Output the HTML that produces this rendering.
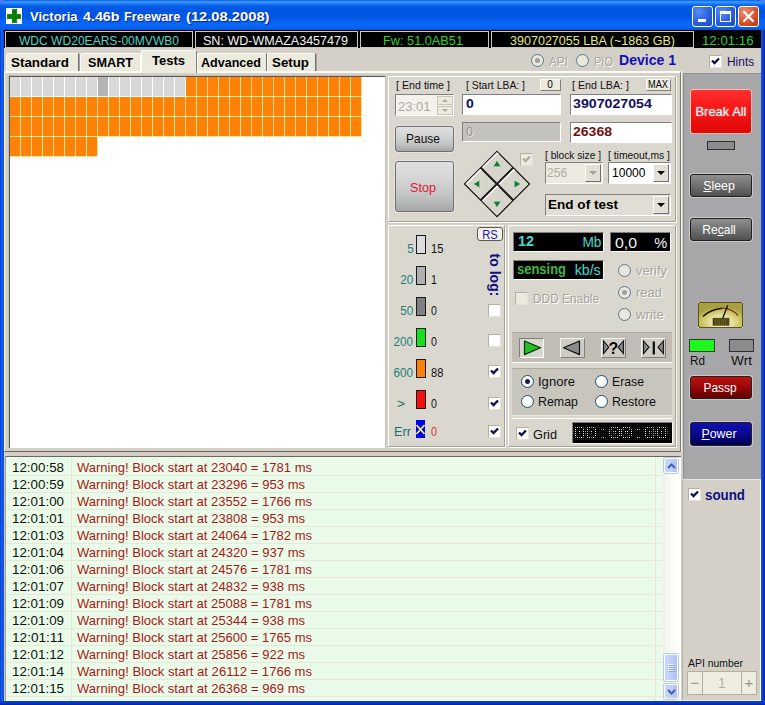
<!DOCTYPE html>
<html><head><meta charset="utf-8"><title>Victoria 4.46b Freeware</title>
<style>
html,body{margin:0;padding:0;background:#4a7cf8;}
body{width:765px;height:705px;position:relative;overflow:hidden;font-family:"Liberation Sans",sans-serif;}
div{position:absolute;}
.t{position:absolute;white-space:nowrap;font-family:"Liberation Sans",sans-serif;}
.blk i{position:absolute;width:10px;height:19px;}
.blk i.o{background:#ff8208;box-shadow:1px 0 0 #ffe290,0 1px 0 #ffe290,1px 1px 0 #fff0c4;}
u{text-decoration:underline;}
</style></head><body>
<div style="left:0px;top:0px;width:765px;height:705px;background:#0831d9;border-radius:8px 8px 0 0;"></div>
<div style="left:0px;top:0px;width:765px;height:30px;border-radius:8px 8px 0 0;background:linear-gradient(#0058d0 0%,#2f8cff 4%,#3a93ff 8%,#1a78f4 13%,#075fe8 20%,#0057e4 30%,#0055e0 55%,#0460f0 68%,#0866f6 80%,#0762f0 92%,#0452da 100%);"></div>
<div style="left:0px;top:30px;width:4px;height:675px;background:linear-gradient(90deg,#0634c8,#1660f0 40%,#0b55ea 70%,#0a49d8);"></div>
<div style="left:761px;top:30px;width:4px;height:675px;background:linear-gradient(90deg,#1c50e0,#0c3ccc 50%,#0224a8);"></div>
<div style="left:0px;top:701px;width:765px;height:4px;background:linear-gradient(#0c40d0,#0a36c4 50%,#0424a0);"></div>
<div style="left:4px;top:30px;width:757px;height:671px;background:#d4d0c8;"></div>
<div style="left:6px;top:8px;width:16px;height:16px;background:#fff;"></div>
<div style="left:11.5px;top:9px;width:5.5px;height:14px;background:#12900f;"></div>
<div style="left:7px;top:13.5px;width:14px;height:5.5px;background:#12900f;"></div>
<div style="left:12.5px;top:10px;width:3.5px;height:12px;background:#0a7a08;"></div>
<div style="left:8px;top:14.5px;width:12px;height:3.5px;background:#0a7a08;"></div>
<span id="t1" class="t" style="left:29.5px;top:8.0px;font-size:13px;line-height:17px;color:#fff;font-weight:bold;transform:scaleX(1.0010);transform-origin:left center;text-shadow:1px 1px 0 #0a2a90;">Victoria</span>
<span id="t2" class="t" style="left:83px;top:8.0px;font-size:13px;line-height:17px;color:#fff;font-weight:bold;transform:scaleX(1.0977);transform-origin:left center;text-shadow:1px 1px 0 #0a2a90;">4.46b</span>
<span id="t3" class="t" style="left:123.5px;top:8.0px;font-size:13px;line-height:17px;color:#fff;font-weight:bold;transform:scaleX(0.9896);transform-origin:left center;text-shadow:1px 1px 0 #0a2a90;">Freeware</span>
<span id="t4" class="t" style="left:185.5px;top:8.0px;font-size:13px;line-height:17px;color:#fff;font-weight:bold;transform:scaleX(1.1324);transform-origin:left center;text-shadow:1px 1px 0 #0a2a90;">(12.08.2008)</span>
<div style="left:692px;top:6px;width:21px;height:21px;border:1px solid #fff;border-radius:3px;box-sizing:border-box;background:radial-gradient(circle at 30% 25%,#5b8df5,#2a5fe0 55%,#1c47c4);"><div style="left:5px;top:12px;width:8px;height:3px;background:#fff"></div></div>
<div style="left:715px;top:6px;width:21px;height:21px;border:1px solid #fff;border-radius:3px;box-sizing:border-box;background:radial-gradient(circle at 30% 25%,#5b8df5,#2a5fe0 55%,#1c47c4);"><div style="left:4px;top:4px;width:11px;height:11px;box-sizing:border-box;border:1px solid #fff;border-top:3px solid #fff"></div></div>
<div style="left:738px;top:6px;width:21px;height:21px;border:1px solid #fff;border-radius:3px;box-sizing:border-box;background:radial-gradient(circle at 30% 25%,#f0906c,#d8532b 55%,#bb3513);"><svg style="position:absolute;left:0;top:0" width="19" height="19" viewBox="0 0 19 19"><path d="M5 5 L14 14 M14 5 L5 14" stroke="#fff" stroke-width="2.2" stroke-linecap="round"/></svg></div>
<div style="left:4px;top:30px;width:757px;height:18px;background:#000;"></div>
<div style="left:5px;top:31px;width:188px;height:17px;box-sizing:border-box;border:1px solid #c8c8c0;background:#000;"></div>
<div style="left:195px;top:31px;width:163px;height:17px;box-sizing:border-box;border:1px solid #c8c8c0;background:#000;"></div>
<div style="left:360px;top:31px;width:129px;height:17px;box-sizing:border-box;border:1px solid #c8c8c0;background:#000;"></div>
<div style="left:491px;top:31px;width:203px;height:17px;box-sizing:border-box;border:1px solid #c8c8c0;background:#000;"></div>
<span id="t5" class="t" style="left:19px;top:31.5px;font-size:13px;line-height:17px;color:#50d4c4;font-weight:normal;transform:scaleX(0.9268);transform-origin:left center;">WDC WD20EARS-00MVWB0</span>
<span id="t6" class="t" style="left:203px;top:31.5px;font-size:13px;line-height:17px;color:#f4f4f4;font-weight:normal;transform:scaleX(0.9650);transform-origin:left center;">SN: WD-WMAZA3457479</span>
<span id="t7" class="t" style="left:383px;top:31.5px;font-size:13px;line-height:17px;color:#30d030;font-weight:normal;transform:scaleX(0.9797);transform-origin:left center;">Fw: 51.0AB51</span>
<span id="t8" class="t" style="left:510px;top:31.5px;font-size:13px;line-height:17px;color:#e4e890;font-weight:normal;transform:scaleX(0.9652);transform-origin:left center;">3907027055 LBA (~1863 GB)</span>
<span id="t9" class="t" style="left:702px;top:31.5px;font-size:13px;line-height:17px;color:#38c840;font-weight:normal;transform:scaleX(1.0176);transform-origin:left center;">12:01:16</span>
<div style="left:6px;top:53px;width:73px;height:18px;box-sizing:border-box;background:#ece9dd;border:1px solid #f8f8f4;border-bottom:none;border-radius:2px 2px 0 0;border-right:1px solid #707070;box-shadow:1px 0 0 #a8a498;"></div>
<span id="t10" class="t" style="left:11px;top:53.5px;font-size:13px;line-height:17px;color:#000;font-weight:bold;transform:scaleX(1.0294);transform-origin:left center;">Standard</span>
<div style="left:80px;top:53px;width:61px;height:18px;box-sizing:border-box;background:#ece9dd;border:1px solid #f8f8f4;border-bottom:none;border-radius:2px 2px 0 0;"></div>
<span id="t11" class="t" style="left:88px;top:53.5px;font-size:13px;line-height:17px;color:#000;font-weight:bold;transform:scaleX(0.9736);transform-origin:left center;">SMART</span>
<div style="left:197px;top:53px;width:70px;height:18px;box-sizing:border-box;background:#ece9dd;border:1px solid #f8f8f4;border-bottom:none;border-radius:2px 2px 0 0;border-right:1px solid #707070;box-shadow:1px 0 0 #a8a498;"></div>
<span id="t12" class="t" style="left:201px;top:53.5px;font-size:13px;line-height:17px;color:#000;font-weight:bold;transform:scaleX(0.9656);transform-origin:left center;">Advanced</span>
<div style="left:267px;top:53px;width:49px;height:18px;box-sizing:border-box;background:#ece9dd;border:1px solid #f8f8f4;border-bottom:none;border-radius:2px 2px 0 0;border-right:1px solid #707070;box-shadow:1px 0 0 #a8a498;"></div>
<span id="t13" class="t" style="left:272px;top:53.5px;font-size:13px;line-height:17px;color:#000;font-weight:bold;transform:scaleX(1.0242);transform-origin:left center;">Setup</span>
<div style="left:4px;top:71px;width:677px;height:381px;box-sizing:border-box;border-top:2px solid #fbfbf8;border-left:1px solid #fff;border-bottom:1px solid #6c685c;border-right:1px solid #807c70;box-shadow:1px 0 0 #f4f4f0;"></div>
<div style="left:141px;top:50px;width:56px;height:23px;box-sizing:border-box;background:#ece9dd;border:1px solid #fff;border-right:1px solid #808080;border-bottom:none;border-radius:2px 2px 0 0;"></div>
<span id="t14" class="t" style="left:152px;top:52.0px;font-size:13px;line-height:17px;color:#000;font-weight:bold;transform:scaleX(1.0000);transform-origin:left center;">Tests</span>
<div style="left:531px;top:54px;width:13px;height:13px;box-sizing:border-box;border:1px solid #587890;border-radius:50%;background:#eae8dc;"><div style="left:3px;top:3px;width:5px;height:5px;border-radius:50%;background:#a0a098"></div></div>
<span id="t15" class="t" style="left:549px;top:52.5px;font-size:13px;line-height:17px;color:#a8a49c;font-weight:normal;transform:scaleX(0.9061);transform-origin:left center;text-shadow:1px 1px 0 #fff;">API</span>
<div style="left:576px;top:54px;width:13px;height:13px;box-sizing:border-box;border:1px solid #587890;border-radius:50%;background:#eae8dc;"></div>
<span id="t16" class="t" style="left:594px;top:52.5px;font-size:13px;line-height:17px;color:#a8a49c;font-weight:normal;transform:scaleX(0.8480);transform-origin:left center;text-shadow:1px 1px 0 #fff;">PIO</span>
<span id="t17" class="t" style="left:618.5px;top:49.9px;font-size:15px;line-height:19px;color:#1010b0;font-weight:bold;transform:scaleX(0.9361);transform-origin:left center;">Device 1</span>
<div style="left:709px;top:55px;width:13px;height:13px;box-sizing:border-box;border:1px solid #e4e2d8;border-top-color:#b4b0a4;border-left-color:#b4b0a4;background:#fff;"><svg style="position:absolute;left:1px;top:1px" width="9" height="9" viewBox="0 0 9 9"><path d="M1 3.5 L3.5 6 L8 1.5" fill="none" stroke="#101050" stroke-width="2.3"/></svg></div>
<span id="t18" class="t" style="left:726.8px;top:53.3px;font-size:13px;line-height:17px;color:#101060;font-weight:normal;transform:scaleX(0.9181);transform-origin:left center;">Hints</span>
<div style="left:8px;top:75px;width:378px;height:373px;background:#c4c0b8;"></div>
<div style="left:9px;top:76px;width:376px;height:372px;box-sizing:border-box;border-top:1px solid #5c5850;border-left:1px solid #5c5850;background:#fff;"></div>
<div class="blk" style="left:0;top:0;width:0;height:0"><i style="left:10px;top:77px;background:#d8d8d8"></i><i style="left:21px;top:77px;background:#d8d8d8"></i><i style="left:32px;top:77px;background:#d8d8d8"></i><i style="left:43px;top:77px;background:#d8d8d8"></i><i style="left:54px;top:77px;background:#d8d8d8"></i><i style="left:65px;top:77px;background:#d8d8d8"></i><i style="left:76px;top:77px;background:#d8d8d8"></i><i style="left:87px;top:77px;background:#d8d8d8"></i><i style="left:98px;top:77px;background:#b4b4b4"></i><i style="left:109px;top:77px;background:#d8d8d8"></i><i style="left:120px;top:77px;background:#d8d8d8"></i><i style="left:131px;top:77px;background:#d8d8d8"></i><i style="left:142px;top:77px;background:#d8d8d8"></i><i style="left:153px;top:77px;background:#d8d8d8"></i><i style="left:164px;top:77px;background:#d8d8d8"></i><i style="left:175px;top:77px;background:#d8d8d8"></i><i class="o" style="left:186px;top:77px"></i><i class="o" style="left:197px;top:77px"></i><i class="o" style="left:208px;top:77px"></i><i class="o" style="left:219px;top:77px"></i><i class="o" style="left:230px;top:77px"></i><i class="o" style="left:241px;top:77px"></i><i class="o" style="left:252px;top:77px"></i><i class="o" style="left:263px;top:77px"></i><i class="o" style="left:274px;top:77px"></i><i class="o" style="left:285px;top:77px"></i><i class="o" style="left:296px;top:77px"></i><i class="o" style="left:307px;top:77px"></i><i class="o" style="left:318px;top:77px"></i><i class="o" style="left:329px;top:77px"></i><i class="o" style="left:340px;top:77px"></i><i class="o" style="left:351px;top:77px"></i><i class="o" style="left:10px;top:97px"></i><i class="o" style="left:21px;top:97px"></i><i class="o" style="left:32px;top:97px"></i><i class="o" style="left:43px;top:97px"></i><i class="o" style="left:54px;top:97px"></i><i class="o" style="left:65px;top:97px"></i><i class="o" style="left:76px;top:97px"></i><i class="o" style="left:87px;top:97px"></i><i class="o" style="left:98px;top:97px"></i><i class="o" style="left:109px;top:97px"></i><i class="o" style="left:120px;top:97px"></i><i class="o" style="left:131px;top:97px"></i><i class="o" style="left:142px;top:97px"></i><i class="o" style="left:153px;top:97px"></i><i class="o" style="left:164px;top:97px"></i><i class="o" style="left:175px;top:97px"></i><i class="o" style="left:186px;top:97px"></i><i class="o" style="left:197px;top:97px"></i><i class="o" style="left:208px;top:97px"></i><i class="o" style="left:219px;top:97px"></i><i class="o" style="left:230px;top:97px"></i><i class="o" style="left:241px;top:97px"></i><i class="o" style="left:252px;top:97px"></i><i class="o" style="left:263px;top:97px"></i><i class="o" style="left:274px;top:97px"></i><i class="o" style="left:285px;top:97px"></i><i class="o" style="left:296px;top:97px"></i><i class="o" style="left:307px;top:97px"></i><i class="o" style="left:318px;top:97px"></i><i class="o" style="left:329px;top:97px"></i><i class="o" style="left:340px;top:97px"></i><i class="o" style="left:351px;top:97px"></i><i class="o" style="left:10px;top:117px"></i><i class="o" style="left:21px;top:117px"></i><i class="o" style="left:32px;top:117px"></i><i class="o" style="left:43px;top:117px"></i><i class="o" style="left:54px;top:117px"></i><i class="o" style="left:65px;top:117px"></i><i class="o" style="left:76px;top:117px"></i><i class="o" style="left:87px;top:117px"></i><i class="o" style="left:98px;top:117px"></i><i class="o" style="left:109px;top:117px"></i><i class="o" style="left:120px;top:117px"></i><i class="o" style="left:131px;top:117px"></i><i class="o" style="left:142px;top:117px"></i><i class="o" style="left:153px;top:117px"></i><i class="o" style="left:164px;top:117px"></i><i class="o" style="left:175px;top:117px"></i><i class="o" style="left:186px;top:117px"></i><i class="o" style="left:197px;top:117px"></i><i class="o" style="left:208px;top:117px"></i><i class="o" style="left:219px;top:117px"></i><i class="o" style="left:230px;top:117px"></i><i class="o" style="left:241px;top:117px"></i><i class="o" style="left:252px;top:117px"></i><i class="o" style="left:263px;top:117px"></i><i class="o" style="left:274px;top:117px"></i><i class="o" style="left:285px;top:117px"></i><i class="o" style="left:296px;top:117px"></i><i class="o" style="left:307px;top:117px"></i><i class="o" style="left:318px;top:117px"></i><i class="o" style="left:329px;top:117px"></i><i class="o" style="left:340px;top:117px"></i><i class="o" style="left:351px;top:117px"></i><i class="o" style="left:10px;top:137px"></i><i class="o" style="left:21px;top:137px"></i><i class="o" style="left:32px;top:137px"></i><i class="o" style="left:43px;top:137px"></i><i class="o" style="left:54px;top:137px"></i><i class="o" style="left:65px;top:137px"></i><i class="o" style="left:76px;top:137px"></i><i class="o" style="left:87px;top:137px"></i></div>
<div style="left:388px;top:76px;width:288px;height:146px;box-sizing:border-box;background:#dad7cf;border:1px solid #fff;border-right-color:#a4a094;border-bottom-color:#a4a094;box-shadow:1px 1px 0 #fff;"></div>
<span id="t19" class="t" style="left:396px;top:78.0px;font-size:11px;line-height:15px;color:#101010;font-weight:normal;transform:scaleX(0.9705);transform-origin:left center;">[ End time ]</span>
<span id="t20" class="t" style="left:466px;top:78.0px;font-size:11px;line-height:15px;color:#101010;font-weight:normal;transform:scaleX(0.9461);transform-origin:left center;">[ Start LBA: ]</span>
<span id="t21" class="t" style="left:572px;top:78.0px;font-size:11px;line-height:15px;color:#101010;font-weight:normal;transform:scaleX(0.9710);transform-origin:left center;">[ End LBA: ]</span>
<div style="left:395px;top:94px;width:59px;height:22px;box-sizing:border-box;border:1px solid #808080;border-right-color:#fff;border-bottom-color:#fff;background:#f4f2ea;"></div>
<span id="t22" class="t" style="left:397.5px;top:97.5px;font-size:13px;line-height:17px;color:#b0aca0;font-weight:normal;transform:scaleX(1.0016);transform-origin:left center;">23:01</span>
<div style="left:437px;top:96px;width:16px;height:9px;box-sizing:border-box;border:1px solid #c8c4b8;background:#ece9dd;"><div style="left:4px;top:2px;border:3px solid transparent;border-top:0;border-bottom:3px solid #b0ac9c;width:0;height:0"></div></div>
<div style="left:437px;top:106px;width:16px;height:9px;box-sizing:border-box;border:1px solid #c8c4b8;background:#ece9dd;"><div style="left:4px;top:2px;border:3px solid transparent;border-bottom:0;border-top:3px solid #b0ac9c;width:0;height:0"></div></div>
<div style="left:540px;top:79px;width:21px;height:12px;box-sizing:border-box;border:1px solid #f8f8f2;border-right-color:#848074;border-bottom-color:#848074;background:#ecebe0;"></div>
<span id="t23" class="t" style="left:550px;top:78.2px;font-size:10px;line-height:14px;color:#000;font-weight:normal;transform:translateX(-50%) ;">0</span>
<div style="left:646px;top:79px;width:25px;height:12px;box-sizing:border-box;border:1px solid #f8f8f2;border-right-color:#848074;border-bottom-color:#848074;background:#ecebe0;"></div>
<span id="t24" class="t" style="left:658px;top:78.2px;font-size:10px;line-height:14px;color:#000;font-weight:normal;transform:translateX(-50%) scaleX(0.9229);">MAX</span>
<div style="left:462px;top:94px;width:99px;height:21px;box-sizing:border-box;border:1px solid #808080;border-right-color:#fff;border-bottom-color:#fff;background:#fff;"></div>
<span id="t25" class="t" style="left:465.5px;top:94.8px;font-size:13.5px;line-height:17.5px;color:#101060;font-weight:bold;transform:scaleX(1.0378);transform-origin:left center;">0</span>
<div style="left:570px;top:94px;width:102px;height:21px;box-sizing:border-box;border:1px solid #808080;border-right-color:#fff;border-bottom-color:#fff;background:#fff;"></div>
<span id="t26" class="t" style="left:573.2px;top:94.8px;font-size:13.5px;line-height:17.5px;color:#101060;font-weight:bold;transform:scaleX(1.0494);transform-origin:left center;">3907027054</span>
<div style="left:462px;top:122px;width:99px;height:20px;box-sizing:border-box;border:1px solid #808080;border-right-color:#fff;border-bottom-color:#fff;background:#c4c2bc;"></div>
<span id="t27" class="t" style="left:465.5px;top:122.8px;font-size:13.5px;line-height:17.5px;color:#98948c;font-weight:normal;transform:scaleX(0.9314);transform-origin:left center;text-shadow:1px 1px 0 #e8e8e8;">0</span>
<div style="left:570px;top:122px;width:102px;height:21px;box-sizing:border-box;border:1px solid #808080;border-right-color:#fff;border-bottom-color:#fff;background:#fff;"></div>
<span id="t28" class="t" style="left:573.2px;top:122.8px;font-size:13.5px;line-height:17.5px;color:#701010;font-weight:bold;transform:scaleX(1.0387);transform-origin:left center;">26368</span>
<div style="left:395px;top:126px;width:59px;height:26px;box-sizing:border-box;border:1px solid #707070;border-radius:3px;background:linear-gradient(#e0e0e0 0%,#d4d4d4 35%,#c2c4c4 70%,#a6a6a6 100%);box-shadow:0 0 0 1px #e4e2dc;"></div>
<span id="t29" class="t" style="left:423.2px;top:129.7px;font-size:13px;line-height:17px;color:#101010;font-weight:normal;transform:translateX(-50%) scaleX(0.9166);">Pause</span>
<div style="left:395px;top:161px;width:59px;height:51px;box-sizing:border-box;border:1px solid #707070;border-radius:3px;background:linear-gradient(#e0e0e0 0%,#d4d4d4 35%,#c2c4c4 70%,#a6a6a6 100%);box-shadow:0 0 0 1px #e4e2dc;"></div>
<span id="t30" class="t" style="left:423.3px;top:179.0px;font-size:13px;line-height:17px;color:#e01838;font-weight:normal;transform:translateX(-50%) scaleX(0.9682);">Stop</span>
<svg style="position:absolute;left:462px;top:148.5px" width="70" height="70" viewBox="0 0 70 70"><path d="M35.0 2.3999999999999986 L51.0 18.4 L35.0 34.4 L19.0 18.4 Z" fill="#d8d5cd" stroke="#101010" stroke-width="1.1"/><path d="M20.7 18.4 L35.0 4.099999999999998 L36.2 5.299999999999999" fill="none" stroke="#fff" stroke-width="1.3"/><path d="M0 -2.8 L3.3 2.6 L-3.3 2.6 Z" fill="#147030" stroke="#58c870" stroke-width="0.5" transform="translate(35.0 14.7) rotate(0)"/><path d="M51.6 19.0 L67.6 35.0 L51.6 51.0 L35.6 35.0 Z" fill="#d8d5cd" stroke="#101010" stroke-width="1.1"/><path d="M37.3 35.0 L51.6 20.7 L52.800000000000004 21.9" fill="none" stroke="#fff" stroke-width="1.3"/><path d="M0 -2.8 L3.3 2.6 L-3.3 2.6 Z" fill="#147030" stroke="#58c870" stroke-width="0.5" transform="translate(55.3 35.0) rotate(90)"/><path d="M35.0 35.6 L51.0 51.6 L35.0 67.6 L19.0 51.6 Z" fill="#d8d5cd" stroke="#101010" stroke-width="1.1"/><path d="M20.7 51.6 L35.0 37.3 L36.2 38.5" fill="none" stroke="#fff" stroke-width="1.3"/><path d="M0 -2.8 L3.3 2.6 L-3.3 2.6 Z" fill="#147030" stroke="#58c870" stroke-width="0.5" transform="translate(35.0 55.3) rotate(180)"/><path d="M18.4 19.0 L34.4 35.0 L18.4 51.0 L2.3999999999999986 35.0 Z" fill="#d8d5cd" stroke="#101010" stroke-width="1.1"/><path d="M4.099999999999998 35.0 L18.4 20.7 L19.599999999999998 21.9" fill="none" stroke="#fff" stroke-width="1.3"/><path d="M0 -2.8 L3.3 2.6 L-3.3 2.6 Z" fill="#147030" stroke="#58c870" stroke-width="0.5" transform="translate(14.7 35.0) rotate(270)"/></svg>
<div style="left:520px;top:153px;width:13px;height:13px;box-sizing:border-box;border:1px solid #e4e2d8;border-top-color:#b4b0a4;border-left-color:#b4b0a4;background:#ece9dd;"><svg style="position:absolute;left:1px;top:1px" width="9" height="9" viewBox="0 0 9 9"><path d="M1 3.5 L3.5 6 L8 1.5" fill="none" stroke="#b0ac9c" stroke-width="2.3"/></svg></div>
<span id="t31" class="t" style="left:545px;top:147.5px;font-size:11px;line-height:15px;color:#101010;font-weight:normal;transform:scaleX(0.9251);transform-origin:left center;">[ block size ]</span>
<span id="t32" class="t" style="left:608px;top:147.5px;font-size:11px;line-height:15px;color:#101010;font-weight:normal;transform:scaleX(0.9389);transform-origin:left center;">[ timeout,ms ]</span>
<div style="left:545px;top:162px;width:58px;height:22px;box-sizing:border-box;border:1px solid #808080;border-right-color:#fff;border-bottom-color:#fff;background:#ece9e0;"></div>
<div style="left:585px;top:164px;width:16px;height:18px;box-sizing:border-box;border:1px solid #fff;border-right-color:#707070;border-bottom-color:#707070;background:#e2e0d6;"><div style="left:3px;top:6px;border:4px solid transparent;border-bottom:0;border-top:4px solid #a0a098;width:0;height:0"></div></div>
<span id="t33" class="t" style="left:547.3px;top:164.1px;font-size:13px;line-height:17px;color:#b0aca0;font-weight:normal;transform:scaleX(0.9307);transform-origin:left center;">256</span>
<div style="left:608px;top:162px;width:63px;height:22px;box-sizing:border-box;border:1px solid #808080;border-right-color:#fff;border-bottom-color:#fff;background:#fff;"></div>
<div style="left:653px;top:164px;width:16px;height:18px;box-sizing:border-box;border:1px solid #fff;border-right-color:#707070;border-bottom-color:#707070;background:#e2e0d6;"><div style="left:3px;top:6px;border:4px solid transparent;border-bottom:0;border-top:4px solid #000;width:0;height:0"></div></div>
<span id="t34" class="t" style="left:611.8px;top:164.1px;font-size:13px;line-height:17px;color:#000;font-weight:normal;transform:scaleX(0.9265);transform-origin:left center;">10000</span>
<div style="left:545px;top:194px;width:126px;height:22px;box-sizing:border-box;border:1px solid #808080;border-right-color:#fff;border-bottom-color:#fff;background:#e0ded4;"></div>
<div style="left:653px;top:196px;width:16px;height:18px;box-sizing:border-box;border:1px solid #fff;border-right-color:#707070;border-bottom-color:#707070;background:#e2e0d6;"><div style="left:3px;top:6px;border:4px solid transparent;border-bottom:0;border-top:4px solid #000;width:0;height:0"></div></div>
<span id="t35" class="t" style="left:547.7px;top:195.8px;font-size:13px;line-height:17px;color:#000;font-weight:bold;transform:scaleX(1.0421);transform-origin:left center;">End of test</span>
<div style="left:388px;top:225px;width:117px;height:222px;box-sizing:border-box;background:#dad7cf;border:1px solid #fff;border-right-color:#a4a094;border-bottom-color:#a4a094;box-shadow:1px 1px 0 #fff;"></div>
<div style="left:477px;top:227px;width:26px;height:14px;box-sizing:border-box;border:1px solid #5c5c48;border-radius:3px;background:#f3f1eb;"></div>
<span id="t36" class="t" style="left:489.8px;top:226.5px;font-size:12px;line-height:16px;color:#2020a0;font-weight:normal;transform:translateX(-50%) scaleX(0.9297);">RS</span>
<div style="left:416px;top:235px;width:10px;height:19px;box-sizing:border-box;border:1px solid #181818;background:#dcdcdc;"></div>
<span id="t37" class="t" style="right:351.5px;top:240.5px;font-size:12px;line-height:16px;color:#208078;font-weight:normal;transform:scaleX(0.9720);transform-origin:right center;">5</span>
<span id="t38" class="t" style="left:430.5px;top:240.5px;font-size:12px;line-height:16px;color:#101010;font-weight:normal;transform:scaleX(0.9207);transform-origin:left center;">15</span>
<div style="left:416px;top:266px;width:10px;height:19px;box-sizing:border-box;border:1px solid #181818;background:#b0b0b0;"></div>
<span id="t39" class="t" style="right:351.5px;top:271.5px;font-size:12px;line-height:16px;color:#208078;font-weight:normal;transform:scaleX(0.9731);transform-origin:right center;">20</span>
<span id="t40" class="t" style="left:430.5px;top:271.5px;font-size:12px;line-height:16px;color:#101010;font-weight:normal;transform:scaleX(0.8822);transform-origin:left center;">1</span>
<div style="left:416px;top:297px;width:10px;height:19px;box-sizing:border-box;border:1px solid #181818;background:#808080;"></div>
<span id="t41" class="t" style="right:351.5px;top:302.5px;font-size:12px;line-height:16px;color:#208078;font-weight:normal;transform:scaleX(0.9731);transform-origin:right center;">50</span>
<span id="t42" class="t" style="left:430.5px;top:302.5px;font-size:12px;line-height:16px;color:#101010;font-weight:normal;transform:scaleX(0.8822);transform-origin:left center;">0</span>
<div style="left:416px;top:328px;width:10px;height:19px;box-sizing:border-box;border:1px solid #181818;background:#18e018;"></div>
<span id="t43" class="t" style="right:351.5px;top:333.5px;font-size:12px;line-height:16px;color:#208078;font-weight:normal;transform:scaleX(0.9735);transform-origin:right center;">200</span>
<span id="t44" class="t" style="left:430.5px;top:333.5px;font-size:12px;line-height:16px;color:#101010;font-weight:normal;transform:scaleX(0.8822);transform-origin:left center;">0</span>
<div style="left:416px;top:359px;width:10px;height:19px;box-sizing:border-box;border:1px solid #181818;background:#ff8208;"></div>
<span id="t45" class="t" style="right:351.5px;top:364.5px;font-size:12px;line-height:16px;color:#208078;font-weight:normal;transform:scaleX(0.9735);transform-origin:right center;">600</span>
<span id="t46" class="t" style="left:430.5px;top:364.5px;font-size:12px;line-height:16px;color:#101010;font-weight:normal;transform:scaleX(0.9207);transform-origin:left center;">88</span>
<div style="left:416px;top:390px;width:10px;height:19px;box-sizing:border-box;border:1px solid #181818;background:#f01010;"></div>
<span id="t47" class="t" style="left:397px;top:395.5px;font-size:12px;line-height:16px;color:#207068;font-weight:normal;transform:scaleX(1.1403);transform-origin:left center;">&gt;</span>
<span id="t48" class="t" style="left:430.5px;top:395.5px;font-size:12px;line-height:16px;color:#101010;font-weight:normal;transform:scaleX(0.8822);transform-origin:left center;">0</span>
<div style="left:416px;top:420px;width:9px;height:18px;background:#0000f0;"><svg style="position:absolute;left:0;top:4px" width="9" height="11" viewBox="0 0 9 11"><path d="M0.5 1 L8.5 10 M8.5 1 L0.5 10" stroke="#f0f060" stroke-width="1.6"/></svg></div>
<span id="t49" class="t" style="left:394px;top:423.5px;font-size:12px;line-height:16px;color:#207068;font-weight:normal;transform:scaleX(1.0625);transform-origin:left center;">Err</span>
<span id="t50" class="t" style="left:430.5px;top:423.5px;font-size:12px;line-height:16px;color:#e03030;font-weight:normal;transform:scaleX(0.8972);transform-origin:left center;">0</span>
<span class="t" style="left:495px;top:275px;font-size:14px;line-height:16px;color:#101080;font-weight:bold;transform:translate(-50%,-50%) rotate(90deg);white-space:nowrap">to log:</span>
<div style="left:488px;top:304px;width:13px;height:13px;box-sizing:border-box;border:1px solid #e4e2d8;border-top-color:#b4b0a4;border-left-color:#b4b0a4;background:#fff;"></div>
<div style="left:488px;top:334px;width:13px;height:13px;box-sizing:border-box;border:1px solid #e4e2d8;border-top-color:#b4b0a4;border-left-color:#b4b0a4;background:#fff;"></div>
<div style="left:488px;top:365px;width:13px;height:13px;box-sizing:border-box;border:1px solid #e4e2d8;border-top-color:#b4b0a4;border-left-color:#b4b0a4;background:#fff;"><svg style="position:absolute;left:1px;top:1px" width="9" height="9" viewBox="0 0 9 9"><path d="M1 3.5 L3.5 6 L8 1.5" fill="none" stroke="#101050" stroke-width="2.3"/></svg></div>
<div style="left:488px;top:397px;width:13px;height:13px;box-sizing:border-box;border:1px solid #e4e2d8;border-top-color:#b4b0a4;border-left-color:#b4b0a4;background:#fff;"><svg style="position:absolute;left:1px;top:1px" width="9" height="9" viewBox="0 0 9 9"><path d="M1 3.5 L3.5 6 L8 1.5" fill="none" stroke="#101050" stroke-width="2.3"/></svg></div>
<div style="left:488px;top:425px;width:13px;height:13px;box-sizing:border-box;border:1px solid #e4e2d8;border-top-color:#b4b0a4;border-left-color:#b4b0a4;background:#fff;"><svg style="position:absolute;left:1px;top:1px" width="9" height="9" viewBox="0 0 9 9"><path d="M1 3.5 L3.5 6 L8 1.5" fill="none" stroke="#101050" stroke-width="2.3"/></svg></div>
<div style="left:508px;top:225px;width:168px;height:222px;box-sizing:border-box;background:#dad7cf;border:1px solid #fff;border-right-color:#a4a094;border-bottom-color:#a4a094;box-shadow:1px 1px 0 #fff;"></div>
<div style="left:513px;top:232px;width:91px;height:20px;box-sizing:border-box;border:1px solid #808080;border-right-color:#fff;border-bottom-color:#fff;background:#000;"></div>
<span id="t51" class="t" style="left:518px;top:232.3px;font-size:14px;line-height:18px;color:#48d8d0;font-weight:bold;transform:scaleX(1.0271);transform-origin:left center;">12</span>
<span id="t52" class="t" style="right:164px;top:233.0px;font-size:14px;line-height:18px;color:#48d8d0;font-weight:normal;transform:scaleX(0.9767);transform-origin:right center;">Mb</span>
<div style="left:610px;top:232px;width:61px;height:20px;box-sizing:border-box;border:1px solid #808080;border-right-color:#fff;border-bottom-color:#fff;background:#000;"></div>
<span id="t53" class="t" style="left:615px;top:233.0px;font-size:15px;line-height:19px;color:#f4f4f4;font-weight:normal;transform:scaleX(1.0547);transform-origin:left center;">0,0</span>
<span id="t54" class="t" style="right:98px;top:233.0px;font-size:15px;line-height:19px;color:#f4f4f4;font-weight:normal;transform:scaleX(0.9742);transform-origin:right center;">%</span>
<div style="left:513px;top:260px;width:91px;height:20px;box-sizing:border-box;border:1px solid #808080;border-right-color:#fff;border-bottom-color:#fff;background:#000;"></div>
<span id="t55" class="t" style="left:517px;top:260.0px;font-size:14px;line-height:18px;color:#40b848;font-weight:bold;transform:scaleX(0.9262);transform-origin:left center;">sensing</span>
<span id="t56" class="t" style="right:164px;top:260.5px;font-size:14px;line-height:18px;color:#48d8d0;font-weight:normal;transform:scaleX(1.0122);transform-origin:right center;">kb/s</span>
<div style="left:618px;top:264px;width:13px;height:13px;box-sizing:border-box;border:1px solid #587890;border-radius:50%;background:#eae8dc;"></div>
<span id="t57" class="t" style="left:636px;top:262.0px;font-size:13px;line-height:17px;color:#a8a49c;font-weight:normal;transform:scaleX(0.9980);transform-origin:left center;text-shadow:1px 1px 0 #fff;">verify</span>
<div style="left:618px;top:286px;width:13px;height:13px;box-sizing:border-box;border:1px solid #587890;border-radius:50%;background:#eae8dc;"><div style="left:3px;top:3px;width:5px;height:5px;border-radius:50%;background:#a0a098"></div></div>
<span id="t58" class="t" style="left:636px;top:284.0px;font-size:13px;line-height:17px;color:#a8a49c;font-weight:normal;transform:scaleX(0.9988);transform-origin:left center;text-shadow:1px 1px 0 #fff;">read</span>
<div style="left:618px;top:308px;width:13px;height:13px;box-sizing:border-box;border:1px solid #587890;border-radius:50%;background:#eae8dc;"></div>
<span id="t59" class="t" style="left:636px;top:306.0px;font-size:13px;line-height:17px;color:#a8a49c;font-weight:normal;transform:scaleX(1.0199);transform-origin:left center;text-shadow:1px 1px 0 #fff;">write</span>
<div style="left:515px;top:292px;width:13px;height:13px;box-sizing:border-box;border:1px solid #e4e2d8;border-top-color:#b4b0a4;border-left-color:#b4b0a4;background:#ece9dd;"></div>
<span id="t60" class="t" style="left:533px;top:291.0px;font-size:12px;line-height:16px;color:#a8a49c;font-weight:normal;transform:scaleX(0.9895);transform-origin:left center;text-shadow:1px 1px 0 #fff;">DDD Enable</span>
<div style="left:512px;top:332px;width:160px;height:31px;background:#c2beb6;border-bottom:1px solid #fff;box-sizing:border-box;border-top:1px solid #b0aca4;"></div>
<div style="left:519px;top:338px;width:25px;height:20px;box-sizing:border-box;border:1px solid #808080;border-right-color:#fff;border-bottom-color:#fff;background:#d6d8d2;"><svg style="position:absolute;left:0;top:0" width="23" height="18" viewBox="0 0 23 18"><path d="M4.5 2 L20.5 8.8 L4.5 15.6 Z" fill="#22c022" stroke="#083008" stroke-width="1.2" stroke-linejoin="round"/></svg></div>
<div style="left:560px;top:338px;width:25px;height:20px;box-sizing:border-box;border:1px solid #f4f4f0;border-right-color:#808080;border-bottom-color:#808080;background:#cfccc4;"><svg style="position:absolute;left:0;top:0" width="23" height="18" viewBox="0 0 23 18"><path d="M18.5 2 L2.5 8.8 L18.5 15.6 Z" fill="#8a8a8a" stroke="#101010" stroke-width="1.2" stroke-linejoin="round"/></svg></div>
<div style="left:601px;top:338px;width:25px;height:20px;box-sizing:border-box;border:1px solid #f4f4f0;border-right-color:#808080;border-bottom-color:#808080;background:#cfccc4;"><svg style="position:absolute;left:0;top:0" width="23" height="18" viewBox="0 0 23 18"><path d="M1.6 2 L6.8 8.2 L1.6 14.5 Z" fill="#8a8a8a" stroke="#101010" stroke-width="1.1"/><path d="M21.4 2 L16.2 8.2 L21.4 14.5 Z" fill="#8a8a8a" stroke="#101010" stroke-width="1.1"/><text x="11.4" y="14.8" font-family="Liberation Sans, sans-serif" font-size="16" font-weight="bold" text-anchor="middle" fill="#080808">?</text></svg></div>
<div style="left:641px;top:338px;width:25px;height:20px;box-sizing:border-box;border:1px solid #f4f4f0;border-right-color:#808080;border-bottom-color:#808080;background:#cfccc4;"><svg style="position:absolute;left:0;top:0" width="23" height="18" viewBox="0 0 23 18"><path d="M1.6 2 L7 8.2 L1.6 14.5 Z" fill="#8a8a8a" stroke="#101010" stroke-width="1.1"/><path d="M21.4 2 L16 8.2 L21.4 14.5 Z" fill="#8a8a8a" stroke="#101010" stroke-width="1.1"/><path d="M11.8 2.5 V15.5" stroke="#080808" stroke-width="2.2"/></svg></div>
<div style="left:512px;top:368px;width:160px;height:48px;background:#c8c5bd;box-sizing:border-box;border-top:1px solid #b0aca4;border-bottom:1px solid #e8e6e0;"></div>
<div style="left:521px;top:375px;width:13px;height:13px;box-sizing:border-box;border:1px solid #21507a;border-radius:50%;background:radial-gradient(circle at 40% 35%,#fff 40%,#e4e4dc);"><div style="left:3px;top:3px;width:5px;height:5px;border-radius:50%;background:#1a1a5a"></div></div>
<span id="t61" class="t" style="left:538px;top:373.0px;font-size:13px;line-height:17px;color:#101010;font-weight:normal;transform:scaleX(1.0034);transform-origin:left center;">Ignore</span>
<div style="left:595px;top:375px;width:13px;height:13px;box-sizing:border-box;border:1px solid #21507a;border-radius:50%;background:radial-gradient(circle at 40% 35%,#fff 40%,#e4e4dc);"></div>
<span id="t62" class="t" style="left:612px;top:373.0px;font-size:13px;line-height:17px;color:#101010;font-weight:normal;transform:scaleX(0.9420);transform-origin:left center;">Erase</span>
<div style="left:521px;top:395px;width:13px;height:13px;box-sizing:border-box;border:1px solid #21507a;border-radius:50%;background:radial-gradient(circle at 40% 35%,#fff 40%,#e4e4dc);"></div>
<span id="t63" class="t" style="left:538px;top:393.0px;font-size:13px;line-height:17px;color:#101010;font-weight:normal;transform:scaleX(0.9542);transform-origin:left center;">Remap</span>
<div style="left:595px;top:395px;width:13px;height:13px;box-sizing:border-box;border:1px solid #21507a;border-radius:50%;background:radial-gradient(circle at 40% 35%,#fff 40%,#e4e4dc);"></div>
<span id="t64" class="t" style="left:612px;top:393.0px;font-size:13px;line-height:17px;color:#101010;font-weight:normal;transform:scaleX(0.9664);transform-origin:left center;">Restore</span>
<div style="left:512px;top:418px;width:160px;height:1px;background:#fff;"></div>
<div style="left:516px;top:427px;width:13px;height:13px;box-sizing:border-box;border:1px solid #e4e2d8;border-top-color:#b4b0a4;border-left-color:#b4b0a4;background:#fff;"><svg style="position:absolute;left:1px;top:1px" width="9" height="9" viewBox="0 0 9 9"><path d="M1 3.5 L3.5 6 L8 1.5" fill="none" stroke="#101050" stroke-width="2.3"/></svg></div>
<span id="t65" class="t" style="left:533px;top:426.0px;font-size:13px;line-height:17px;color:#101010;font-weight:normal;transform:scaleX(0.9771);transform-origin:left center;">Grid</span>
<svg style="position:absolute;left:572px;top:422px;will-change:transform" width="101" height="22" viewBox="0 0 101 22"><defs><pattern id="dm" width="2" height="2" patternUnits="userSpaceOnUse"><path d="M0 0H2V1H1V2H0Z" fill="#000" shape-rendering="crispEdges"/></pattern></defs><rect width="101" height="22" fill="#f8f8f4"/><rect width="100" height="21" fill="#808078"/><rect x="1" y="1" width="99" height="20" fill="#000"/><rect x="2" y="4" width="97" height="15" fill="#1c2216"/><g transform="translate(0.2 17.4) scale(1 0.87)"><text x="0" y="0" font-family="Liberation Mono, monospace" font-size="24" fill="#f4f3d8" textLength="96.8" lengthAdjust="spacing">00:00:00</text></g><rect x="1" y="1" width="99" height="20" fill="url(#dm)"/></svg>
<div style="left:683px;top:73px;width:78px;height:406px;background:#a7a7aa;box-sizing:border-box;border-left:1px solid #8c8c8c;border-top:1px solid #949494;"></div>
<div style="left:683px;top:479px;width:78px;height:1px;background:#e8e6e0;"></div>
<div style="left:760px;top:480px;width:1px;height:221px;background:#fff;"></div>
<div style="left:683px;top:700px;width:78px;height:1px;background:#fff;"></div>
<div style="left:690px;top:89px;width:62px;height:45px;box-sizing:border-box;border:1px solid #f8c0b0;border-radius:3px;background:linear-gradient(#ff3030 0%,#f81818 40%,#e00808 100%);"></div>
<span id="t66" class="t" style="left:720.5px;top:103.0px;font-size:13px;line-height:17px;color:#fff;font-weight:normal;transform:translateX(-50%) scaleX(0.9939);text-shadow:0 0 2px rgba(255,255,255,.5);">Break All</span>
<div style="left:707px;top:141px;width:28px;height:9px;box-sizing:border-box;border:1px solid #303030;background:#8c8c8c;"></div>
<div style="left:690px;top:174px;width:62px;height:23px;box-sizing:border-box;border:1px solid #202020;border-radius:3px;box-shadow:0 0 0 1px #c8c8c8;background:linear-gradient(#909090,#707070 50%,#505050);"></div>
<span id="t67" class="t" style="left:719.3px;top:177.0px;font-size:13px;line-height:17px;color:#fff;font-weight:normal;transform:translateX(-50%) scaleX(0.9474);"><u>S</u>leep</span>
<div style="left:690px;top:218px;width:62px;height:23px;box-sizing:border-box;border:1px solid #202020;border-radius:3px;box-shadow:0 0 0 1px #c8c8c8;background:linear-gradient(#909090,#707070 50%,#505050);"></div>
<span id="t68" class="t" style="left:719.3px;top:220.8px;font-size:13px;line-height:17px;color:#fff;font-weight:normal;transform:translateX(-50%) scaleX(0.9269);">Re<u>c</u>all</span>
<svg style="position:absolute;left:698px;top:301.5px" width="45" height="26" viewBox="0 0 45 26"><defs><radialGradient id="mg" cx="52%" cy="78%" r="62%"><stop offset="0" stop-color="#f4f0c8"/><stop offset="0.45" stop-color="#e4dc98"/><stop offset="0.8" stop-color="#c4bc54"/><stop offset="1" stop-color="#a8a040"/></radialGradient></defs><rect x="0.5" y="0.5" width="44" height="25" fill="url(#mg)" stroke="#5c5420" stroke-width="1"/><path d="M5 14.5 Q12 7.5 24 6.2" fill="none" stroke="#181008" stroke-width="1.5"/><path d="M24 6.2 Q34 6.5 40 13.5" fill="none" stroke="#803818" stroke-width="1.3"/><path d="M24.4 17 L29.7 3.4" stroke="#100c04" stroke-width="1.3"/><rect x="15" y="16.2" width="16" height="7" fill="#4c4414" stroke="#3a3410" stroke-width="0.6"/><path d="M17 18 H29 M17 20 H29 M17 22 H29" stroke="#8c8440" stroke-width="0.7" stroke-dasharray="1.2 0.8"/><rect x="0" y="0" width="1" height="1" fill="#fff"/><rect x="44" y="0" width="1" height="1" fill="#fff"/><rect x="0" y="25" width="1" height="1" fill="#fff"/><rect x="44" y="25" width="1" height="1" fill="#fff"/></svg>
<div style="left:689px;top:339px;width:26px;height:13px;box-sizing:border-box;border:1px solid #204020;background:#20f820;"></div>
<div style="left:729px;top:339px;width:25px;height:13px;box-sizing:border-box;border:1px solid #303030;background:#8c8c8c;"></div>
<span id="t69" class="t" style="left:690px;top:352.0px;font-size:13px;line-height:17px;color:#101010;font-weight:normal;transform:scaleX(0.9023);transform-origin:left center;">Rd</span>
<span id="t70" class="t" style="left:731px;top:352.0px;font-size:13px;line-height:17px;color:#101010;font-weight:normal;transform:scaleX(1.0508);transform-origin:left center;">Wrt</span>
<div style="left:690px;top:376px;width:62px;height:23px;box-sizing:border-box;border:1px solid #202020;border-radius:3px;box-shadow:0 0 0 1px #c8c8c8;background:linear-gradient(#c01010,#980808 50%,#600000);"></div>
<span id="t71" class="t" style="left:720px;top:378.8px;font-size:13px;line-height:17px;color:#fff;font-weight:normal;transform:translateX(-50%) scaleX(0.9131);">Passp</span>
<div style="left:690px;top:422px;width:62px;height:24px;box-sizing:border-box;border:1px solid #202020;border-radius:3px;box-shadow:0 0 0 1px #c8c8c8;background:linear-gradient(#1010b0,#080890 50%,#000050);"></div>
<span id="t72" class="t" style="left:719.2px;top:425.0px;font-size:13px;line-height:17px;color:#fff;font-weight:normal;transform:translateX(-50%) scaleX(0.9496);"><u>P</u>ower</span>
<div style="left:682px;top:480px;width:1px;height:221px;background:#b4b0a4;"></div>
<div style="left:4px;top:700px;width:757px;height:1px;background:#f0f4fc;"></div>
<div style="left:688px;top:488px;width:13px;height:13px;box-sizing:border-box;border:1px solid #e4e2d8;border-top-color:#b4b0a4;border-left-color:#b4b0a4;background:#fff;"><svg style="position:absolute;left:1px;top:1px" width="9" height="9" viewBox="0 0 9 9"><path d="M1 3.5 L3.5 6 L8 1.5" fill="none" stroke="#101050" stroke-width="2.3"/></svg></div>
<span id="t73" class="t" style="left:705px;top:486.0px;font-size:14px;line-height:18px;color:#101080;font-weight:bold;transform:scaleX(0.9524);transform-origin:left center;">sound</span>
<span id="t74" class="t" style="left:688px;top:655.5px;font-size:11px;line-height:15px;color:#101010;font-weight:normal;transform:scaleX(0.9467);transform-origin:left center;">API number</span>
<div style="left:687px;top:671px;width:70px;height:24px;box-sizing:border-box;border:1px solid #b4b09c;background:#efede0;"></div>
<div style="left:702px;top:672px;width:1px;height:22px;background:#b4b09c;"></div>
<div style="left:741px;top:672px;width:1px;height:22px;background:#b4b09c;"></div>
<span id="t75" class="t" style="left:695px;top:672.5px;font-size:15px;line-height:19px;color:#989484;font-weight:normal;transform:translateX(-50%) ;">&minus;</span>
<span id="t76" class="t" style="left:722px;top:674.0px;font-size:14px;line-height:18px;color:#b4b0a0;font-weight:normal;transform:translateX(-50%) ;">1</span>
<span id="t77" class="t" style="left:749px;top:672.5px;font-size:15px;line-height:19px;color:#989484;font-weight:normal;transform:translateX(-50%) ;">+</span>
<div style="left:5px;top:456px;width:676px;height:245px;box-sizing:border-box;border-top:1px solid #6c685c;border-left:1px solid #a09c90;background:#eafce9;"></div>
<span id="t78" class="t" style="left:12px;top:459.0px;font-size:13px;line-height:17px;color:#101010;font-weight:normal;transform:scaleX(1.0275);transform-origin:left center;">12:00:58</span>
<span id="t79" class="t" style="left:77px;top:459.0px;font-size:13px;line-height:17px;color:#a81818;font-weight:normal;transform:scaleX(1.0011);transform-origin:left center;">Warning! Block start at 23040 = 1781 ms</span>
<div style="left:6px;top:475px;width:657px;height:1px;background:#e6e8d8;"></div>
<span id="t80" class="t" style="left:12px;top:476.0px;font-size:13px;line-height:17px;color:#101010;font-weight:normal;transform:scaleX(1.0275);transform-origin:left center;">12:00:59</span>
<span id="t81" class="t" style="left:77px;top:476.0px;font-size:13px;line-height:17px;color:#a81818;font-weight:normal;transform:scaleX(1.0022);transform-origin:left center;">Warning! Block start at 23296 = 953 ms</span>
<div style="left:6px;top:492px;width:657px;height:1px;background:#e6e8d8;"></div>
<span id="t82" class="t" style="left:12px;top:493.0px;font-size:13px;line-height:17px;color:#101010;font-weight:normal;transform:scaleX(1.0275);transform-origin:left center;">12:01:00</span>
<span id="t83" class="t" style="left:77px;top:493.0px;font-size:13px;line-height:17px;color:#a81818;font-weight:normal;transform:scaleX(1.0011);transform-origin:left center;">Warning! Block start at 23552 = 1766 ms</span>
<div style="left:6px;top:509px;width:657px;height:1px;background:#e6e8d8;"></div>
<span id="t84" class="t" style="left:12px;top:510.0px;font-size:13px;line-height:17px;color:#101010;font-weight:normal;transform:scaleX(1.0275);transform-origin:left center;">12:01:01</span>
<span id="t85" class="t" style="left:77px;top:510.0px;font-size:13px;line-height:17px;color:#a81818;font-weight:normal;transform:scaleX(1.0022);transform-origin:left center;">Warning! Block start at 23808 = 953 ms</span>
<div style="left:6px;top:526px;width:657px;height:1px;background:#e6e8d8;"></div>
<span id="t86" class="t" style="left:12px;top:527.0px;font-size:13px;line-height:17px;color:#101010;font-weight:normal;transform:scaleX(1.0275);transform-origin:left center;">12:01:03</span>
<span id="t87" class="t" style="left:77px;top:527.0px;font-size:13px;line-height:17px;color:#a81818;font-weight:normal;transform:scaleX(1.0011);transform-origin:left center;">Warning! Block start at 24064 = 1782 ms</span>
<div style="left:6px;top:543px;width:657px;height:1px;background:#e6e8d8;"></div>
<span id="t88" class="t" style="left:12px;top:544.0px;font-size:13px;line-height:17px;color:#101010;font-weight:normal;transform:scaleX(1.0275);transform-origin:left center;">12:01:04</span>
<span id="t89" class="t" style="left:77px;top:544.0px;font-size:13px;line-height:17px;color:#a81818;font-weight:normal;transform:scaleX(1.0022);transform-origin:left center;">Warning! Block start at 24320 = 937 ms</span>
<div style="left:6px;top:560px;width:657px;height:1px;background:#e6e8d8;"></div>
<span id="t90" class="t" style="left:12px;top:561.0px;font-size:13px;line-height:17px;color:#101010;font-weight:normal;transform:scaleX(1.0275);transform-origin:left center;">12:01:06</span>
<span id="t91" class="t" style="left:77px;top:561.0px;font-size:13px;line-height:17px;color:#a81818;font-weight:normal;transform:scaleX(1.0011);transform-origin:left center;">Warning! Block start at 24576 = 1781 ms</span>
<div style="left:6px;top:577px;width:657px;height:1px;background:#e6e8d8;"></div>
<span id="t92" class="t" style="left:12px;top:578.0px;font-size:13px;line-height:17px;color:#101010;font-weight:normal;transform:scaleX(1.0275);transform-origin:left center;">12:01:07</span>
<span id="t93" class="t" style="left:77px;top:578.0px;font-size:13px;line-height:17px;color:#a81818;font-weight:normal;transform:scaleX(1.0022);transform-origin:left center;">Warning! Block start at 24832 = 938 ms</span>
<div style="left:6px;top:594px;width:657px;height:1px;background:#e6e8d8;"></div>
<span id="t94" class="t" style="left:12px;top:595.0px;font-size:13px;line-height:17px;color:#101010;font-weight:normal;transform:scaleX(1.0275);transform-origin:left center;">12:01:09</span>
<span id="t95" class="t" style="left:77px;top:595.0px;font-size:13px;line-height:17px;color:#a81818;font-weight:normal;transform:scaleX(1.0011);transform-origin:left center;">Warning! Block start at 25088 = 1781 ms</span>
<div style="left:6px;top:611px;width:657px;height:1px;background:#e6e8d8;"></div>
<span id="t96" class="t" style="left:12px;top:612.0px;font-size:13px;line-height:17px;color:#101010;font-weight:normal;transform:scaleX(1.0275);transform-origin:left center;">12:01:09</span>
<span id="t97" class="t" style="left:77px;top:612.0px;font-size:13px;line-height:17px;color:#a81818;font-weight:normal;transform:scaleX(1.0022);transform-origin:left center;">Warning! Block start at 25344 = 938 ms</span>
<div style="left:6px;top:628px;width:657px;height:1px;background:#e6e8d8;"></div>
<span id="t98" class="t" style="left:12px;top:629.0px;font-size:13px;line-height:17px;color:#101010;font-weight:normal;transform:scaleX(1.0475);transform-origin:left center;">12:01:11</span>
<span id="t99" class="t" style="left:77px;top:629.0px;font-size:13px;line-height:17px;color:#a81818;font-weight:normal;transform:scaleX(1.0011);transform-origin:left center;">Warning! Block start at 25600 = 1765 ms</span>
<div style="left:6px;top:645px;width:657px;height:1px;background:#e6e8d8;"></div>
<span id="t100" class="t" style="left:12px;top:646.0px;font-size:13px;line-height:17px;color:#101010;font-weight:normal;transform:scaleX(1.0275);transform-origin:left center;">12:01:12</span>
<span id="t101" class="t" style="left:77px;top:646.0px;font-size:13px;line-height:17px;color:#a81818;font-weight:normal;transform:scaleX(1.0022);transform-origin:left center;">Warning! Block start at 25856 = 922 ms</span>
<div style="left:6px;top:662px;width:657px;height:1px;background:#e6e8d8;"></div>
<span id="t102" class="t" style="left:12px;top:663.0px;font-size:13px;line-height:17px;color:#101010;font-weight:normal;transform:scaleX(1.0275);transform-origin:left center;">12:01:14</span>
<span id="t103" class="t" style="left:77px;top:663.0px;font-size:13px;line-height:17px;color:#a81818;font-weight:normal;transform:scaleX(1.0053);transform-origin:left center;">Warning! Block start at 26112 = 1766 ms</span>
<div style="left:6px;top:679px;width:657px;height:1px;background:#e6e8d8;"></div>
<span id="t104" class="t" style="left:12px;top:680.0px;font-size:13px;line-height:17px;color:#101010;font-weight:normal;transform:scaleX(1.0275);transform-origin:left center;">12:01:15</span>
<span id="t105" class="t" style="left:77px;top:680.0px;font-size:13px;line-height:17px;color:#a81818;font-weight:normal;transform:scaleX(1.0022);transform-origin:left center;">Warning! Block start at 26368 = 969 ms</span>
<div style="left:6px;top:696px;width:657px;height:1px;background:#e6e8d8;"></div>
<div style="left:71px;top:457px;width:1px;height:244px;background:#e6e8d8;"></div>
<div style="left:655px;top:457px;width:1px;height:244px;background:#e6e8d8;"></div>
<div style="left:663px;top:457px;width:18px;height:244px;background:linear-gradient(90deg,#f0f0ea,#fdfdfb 60%,#fff);"></div>
<div style="left:664px;top:458px;width:14px;height:15px;box-sizing:border-box;border:1px solid #fff;border-radius:2px;background:linear-gradient(90deg,#c8d8fc,#bccdf8 60%,#b0c0f0);box-shadow:0 0 0 1px #b8c8f0;"><svg style="position:absolute;left:2px;top:3px" width="9" height="8" viewBox="0 0 9 8"><path d="M1 6 L4.5 2.5 L8 6" fill="none" stroke="#4060b0" stroke-width="2"/></svg></div>
<div style="left:664px;top:654px;width:14px;height:27px;box-sizing:border-box;border:1px solid #fff;border-radius:2px;background:linear-gradient(90deg,#c8d8fc,#bccdf8 60%,#b0c0f0);box-shadow:0 0 0 1px #b8c8f0;"><div style="left:3px;top:9px;width:6px;height:1px;background:#eef4ff;box-shadow:0 2px 0 #eef4ff,0 4px 0 #eef4ff,0 6px 0 #eef4ff,1px 1px 0 #8ca0dc,1px 3px 0 #8ca0dc,1px 5px 0 #8ca0dc,1px 7px 0 #8ca0dc"></div></div>
<div style="left:664px;top:684px;width:14px;height:15px;box-sizing:border-box;border:1px solid #fff;border-radius:2px;background:linear-gradient(90deg,#c8d8fc,#bccdf8 60%,#b0c0f0);box-shadow:0 0 0 1px #b8c8f0;"><svg style="position:absolute;left:2px;top:3px" width="9" height="8" viewBox="0 0 9 8"><path d="M1 2 L4.5 5.5 L8 2" fill="none" stroke="#4060b0" stroke-width="2"/></svg></div>
</body></html>
